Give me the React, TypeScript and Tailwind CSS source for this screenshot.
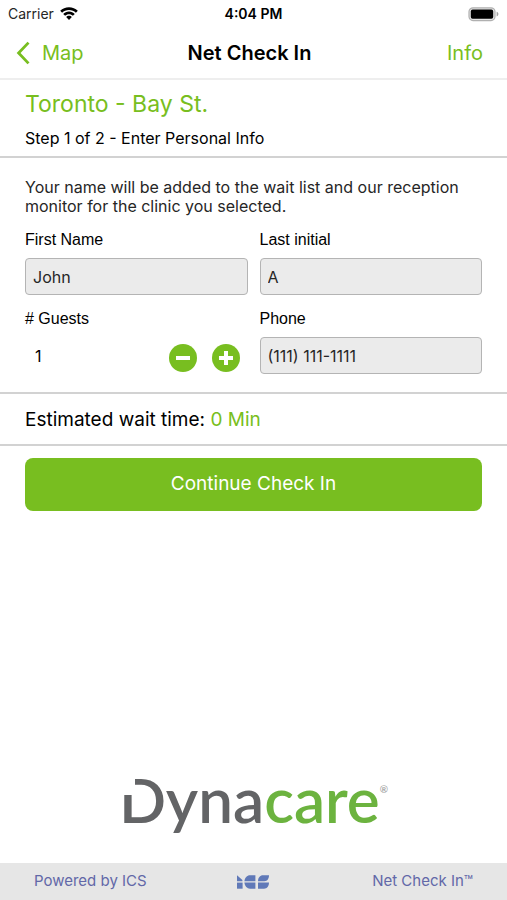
import { useState, ReactNode } from "react"

const WifiIcon = () => (
  <svg viewBox="0 0 18 14" className="h-3.5 w-[18px]" fill="currentColor" aria-hidden="true">
    <path d="M9 0.2C5.600 0.200 2.500 1.500 0.200 3.700L2.100 5.700C3.900 4 6.300 3 9 3s5.100 1 6.900 2.700L17.800 3.700C15.500 1.500 12.400 0.200 9 0.200z" />
    <path d="M9 4.500c-2.300 0-4.300 0.900-5.800 2.400L5.100 8.800c1-1 2.400-1.600 3.900-1.600s2.900 0.600 3.900 1.600l1.900-1.900C13.300 5.400 11.300 4.500 9 4.500z" />
    <path d="M9 8.700c-1.100 0-2.100 0.500-2.800 1.200L9 13l2.800-3.100C11.100 9.200 10.100 8.700 9 8.700z" />
  </svg>
)

const BatteryIcon = () => (
  <svg viewBox="0 0 31 15" className="h-[15px] w-[31px]" aria-hidden="true">
    <rect x="1" y="0.8" width="26" height="12.800" rx="4" fill="#e4e4e4" stroke="#b0b0b0" strokeWidth="1.200" />
    <rect x="2.800" y="2.600" width="22.400" height="9.200" rx="1.800" fill="#000" />
    <path d="M28.600 4.800c1.200 0.400 1.800 1.200 1.800 2.300s-0.600 1.900-1.800 2.300z" fill="#a3a3a3" />
  </svg>
)

const BackIcon = () => (
  <svg viewBox="0 0 14 24" className="h-6 w-3.5" aria-hidden="true">
    <path
      d="M12.500 1.600L2.600 12l9.900 10.400"
      fill="none"
      stroke="currentColor"
      strokeWidth="2.800"
    />
  </svg>
)

const IcsLogo = () => (
  <svg viewBox="0 0 32 14" className="h-3.5 w-8" fill="#6079b8" role="img" aria-label="ICS">
    <path d="M0 0.300L5.400 5v1.200H0z" />
    <path d="M0 7.600h5.600V13.700H0z" />
    <path d="M13 0.300h5.400v5.900H7.400C7.800 2.800 10 0.300 13 0.300z" />
    <path d="M7.400 7.600h11v6.100H13C10 13.700 7.800 11.200 7.400 7.600z" />
    <path d="M26 0.300h6c0 3.400-1.600 5.900-4.600 5.900h-6.400C21 2.800 23 0.300 26 0.300z" />
    <path d="M21 7.600h11c0 3.800-2 6.100-5 6.100h-6z" />
  </svg>
)

const StatusBar = () => (
  <div className="grid grid-cols-3 items-center h-7 px-2 text-sm">
    <span className="flex items-center gap-1.5 text-neutral-800">
      Carrier
      <span className="text-black">
        <WifiIcon />
      </span>
    </span>
    <span className="text-center font-semibold">4:04 PM</span>
    <span className="flex justify-end">
      <BatteryIcon />
    </span>
  </div>
)

const NavBar = () => (
  <nav className="flex items-center justify-between h-[52px] px-4 border-b-2 border-[#eeeeee] text-xl">
    <button className="flex flex-1 items-center gap-3 text-[#78be20]">
      <BackIcon />
      Map
    </button>
    <h1 className="font-semibold">Net Check In</h1>
    <button className="flex-1 pr-2 text-right text-[#78be20]">Info</button>
  </nav>
)

const Field = ({
  id,
  label,
  defaultValue,
  type = "text",
}: {
  id: string
  label: string
  defaultValue: string
  type?: string
}) => (
  <div>
    <label htmlFor={id} className="block leading-5 font-['Liberation_Sans',sans-serif]">
      {label}
    </label>
    <input
      id={id}
      type={type}
      defaultValue={defaultValue}
      className="mt-2 block h-[37px] w-full rounded border border-[#b4b4b4] bg-[#ebebeb] px-[7px] text-base text-neutral-800"
    />
  </div>
)

const RoundButton = ({
  label,
  onClick,
  children,
}: {
  label: string
  onClick: () => void
  children: ReactNode
}) => (
  <button
    aria-label={label}
    onClick={onClick}
    className="flex h-7 w-7 items-center justify-center rounded-full bg-[#78be20] text-white"
  >
    <svg viewBox="0 0 14 14" className="h-3.5 w-3.5" stroke="currentColor" strokeWidth="4">
      {children}
    </svg>
  </button>
)

const Guests = () => {
  const [guests, setGuests] = useState(1)
  return (
    <div>
      <span id="guests" className="block leading-5 font-['Liberation_Sans',sans-serif]">
        # Guests
      </span>
      <div className="mt-2 flex h-[37px] items-center pl-2.5 pr-2">
        <output aria-labelledby="guests" className="flex-1">
          {guests}
        </output>
        <div className="flex gap-[15px] pt-1">
          <RoundButton label="Remove guest" onClick={() => setGuests(Math.max(1, guests - 1))}>
            <path d="M0 7h14" />
          </RoundButton>
          <RoundButton label="Add guest" onClick={() => setGuests(guests + 1)}>
            <path d="M0 7h14M7 0v14" />
          </RoundButton>
        </div>
      </div>
    </div>
  )
}

const Brand = () => (
  <div className="relative flex items-start font-['Lato',sans-serif] text-[62px] leading-[72px] font-semibold text-[#636466]">
    {/* notch in the corner of the D */}
    <span className="absolute left-0 top-2 h-6 w-4 bg-white" />
    Dyna<span className="text-[#6cb33f]">care</span>
    <span className="pt-5 text-[10px] leading-3 text-neutral-400">®</span>
  </div>
)

const App = () => {
  return (
    <div className="flex min-h-screen flex-col bg-white text-black font-['Inter',sans-serif]">
      <StatusBar />
      <NavBar />
      <main className="flex flex-1 flex-col">
        <header className="border-b-2 border-[#d2d2d2] px-[25px] py-2">
          <h2 className="text-[23px] leading-8 text-[#78be20]">Toronto - Bay St.</h2>
          <p className="mt-2 leading-5">Step 1 of 2 - Enter Personal Info</p>
        </header>

        <section className="border-b-2 border-[#d2d2d2] px-[25px] pt-5 pb-[18px]">
          <p className="leading-[19px] text-neutral-800">
            Your name will be added to the wait list and our reception monitor for the clinic you
            selected.
          </p>
          <div className="mt-3.5 grid grid-cols-2 gap-x-3 gap-y-3.5">
            <Field id="first-name" label="First Name" defaultValue="John" />
            <Field id="last-initial" label="Last initial" defaultValue="A" />
            <Guests />
            <Field id="phone" label="Phone" defaultValue="(111) 111-1111" type="tel" />
          </div>
        </section>

        <p className="border-b-2 border-[#d2d2d2] px-[25px] pt-3.5 pb-3 text-[19px] leading-6">
          Estimated wait time: <span className="text-[#78be20]">0 Min</span>
        </p>

        <div className="px-[25px] pt-3">
          <button className="h-[53px] w-full rounded-lg bg-[#78be20] text-[19px] text-white">
            Continue Check In
          </button>
        </div>

        <div className="mt-auto flex justify-center pb-7">
          <Brand />
        </div>
      </main>
      <footer className="grid h-[37px] grid-cols-3 items-center bg-[#e6e6e6] px-[34px] text-[15px] text-[#6268a8]">
        <span>Powered by ICS</span>
        <span className="flex justify-center">
          <IcsLogo />
        </span>
        <span className="text-right">Net Check In™</span>
      </footer>
    </div>
  )
}

export default App
